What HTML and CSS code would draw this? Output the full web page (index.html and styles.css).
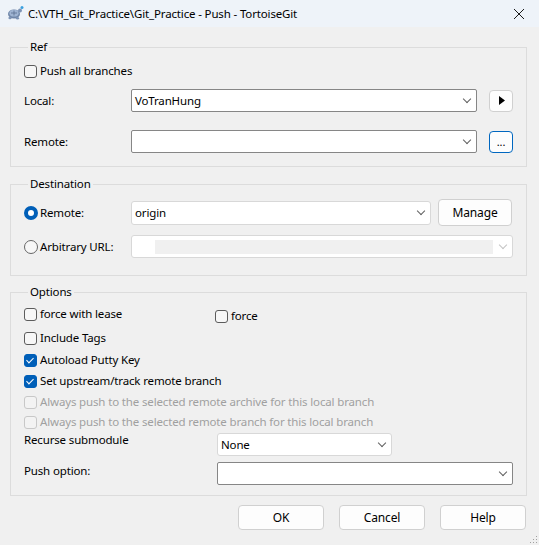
FILE: index.html
```html
<!DOCTYPE html>
<html>
<head>
<meta charset="utf-8">
<link rel="stylesheet" href="styles.css">
</head>
<body>
<div class="titlebar">
  <svg class="appicon" width="18" height="16" viewBox="0 0 18 16">
    <ellipse cx="8" cy="9" rx="6" ry="4.5" fill="#6f86a8"/>
    <ellipse cx="8" cy="8.2" rx="4.6" ry="3.4" fill="#9fb4d2"/>
    <path d="M5 8 h6 M8 5.5 v5" stroke="#5b6f90" stroke-width="0.8"/>
    <circle cx="14" cy="5.5" r="2" fill="#7d93b5"/>
    <circle cx="16" cy="2.5" r="1.5" fill="#3aa0e0"/>
    <ellipse cx="4" cy="13" rx="1.6" ry="1.2" fill="#7d93b5"/>
    <ellipse cx="11.5" cy="13.3" rx="1.6" ry="1.2" fill="#7d93b5"/>
  </svg>
  <span class="title">C:\VTH_Git_Practice\Git_Practice - Push - TortoiseGit</span>
  <svg class="close" width="12" height="12" viewBox="0 0 12 12">
    <path d="M1 1 L11 11 M11 1 L1 11" stroke="#1a1a1a" stroke-width="1"/>
  </svg>
</div>

<div class="content">
  <fieldset class="group group-ref">
    <legend>Ref</legend>
    <div class="check-row ref-check">
      <span class="cb"></span><span>Push all branches</span>
    </div>
    <div class="ref-grid ref-local">
      <span class="label">Local:</span>
      <div class="combo combo-dark"><span class="combo-text">VoTranHung</span><span class="chev"></span></div>
      <button class="btn btn-small"><svg width="6" height="9" viewBox="0 0 6 9"><path d="M0 0 L6 4.5 L0 9 Z" fill="#000"/></svg></button>
    </div>
    <div class="ref-grid ref-remote">
      <span class="label">Remote:</span>
      <div class="combo combo-dark"><span class="combo-text"></span><span class="chev"></span></div>
      <button class="btn btn-small btn-focus">...</button>
    </div>
  </fieldset>

  <fieldset class="group group-dest">
    <legend>Destination</legend>
    <div class="dest-row dest-remote">
      <div class="radio-label"><span class="radio radio-on"></span><span>Remote:</span></div>
      <div class="combo combo-light combo-origin"><span class="combo-text">origin</span><span class="chev"></span></div>
      <button class="btn btn-manage">Manage</button>
    </div>
    <div class="dest-row dest-url">
      <div class="radio-label"><span class="radio"></span><span>Arbitrary URL:</span></div>
      <div class="combo combo-light combo-disabled combo-url"><span class="url-bar"></span><span class="chev chev-dis"></span></div>
    </div>
  </fieldset>

  <fieldset class="group group-opt">
    <legend>Options</legend>
    <div class="opt-first">
      <div class="check-row"><span class="cb"></span><span>force with lease</span></div>
      <div class="check-row force"><span class="cb"></span><span>force</span></div>
    </div>
    <div class="check-row opt-tags"><span class="cb"></span><span>Include Tags</span></div>
    <div class="check-row opt-putty"><span class="cb cb-on"></span><span>Autoload Putty Key</span></div>
    <div class="check-row opt-up"><span class="cb cb-on"></span><span>Set upstream/track remote branch</span></div>
    <div class="check-row opt-dis1 disabled"><span class="cb cb-dis"></span><span>Always push to the selected remote archive for this local branch</span></div>
    <div class="check-row opt-dis2 disabled"><span class="cb cb-dis"></span><span>Always push to the selected remote branch for this local branch</span></div>
    <div class="opt-grid opt-recurse">
      <span class="label">Recurse submodule</span>
      <div class="combo combo-light combo-none"><span class="combo-text">None</span><span class="chev"></span></div>
    </div>
    <div class="opt-grid opt-push">
      <span class="label">Push option:</span>
      <div class="combo combo-dark combo-push"><span class="combo-text"></span><span class="chev"></span></div>
    </div>
  </fieldset>

  <div class="buttons">
    <button class="btn btn-dlg">OK</button>
    <button class="btn btn-dlg">Cancel</button>
    <button class="btn btn-dlg">Help</button>
  </div>
</div>
<svg class="grip" width="8" height="8" viewBox="0 0 8 8">
  <rect x="6" y="0" width="1" height="1" fill="#a0a0a0"/>
  <rect x="3" y="3" width="1" height="1" fill="#a0a0a0"/>
  <rect x="6" y="3" width="1" height="1" fill="#a0a0a0"/>
  <rect x="0" y="6" width="1" height="1" fill="#a0a0a0"/>
  <rect x="3" y="6" width="1" height="1" fill="#a0a0a0"/>
  <rect x="6" y="6" width="1" height="1" fill="#a0a0a0"/>
</svg>
</body>
</html>
```

FILE: styles.css
```css
* { box-sizing: border-box; }
html, body {
  margin: 0;
  padding: 0;
  background: #f0f0f0;
  width: 539px;
  height: 545px;
  overflow: hidden;
  font-family: "Noto Sans", "Open Sans", sans-serif;
  font-size: 11.5px;
  letter-spacing: -0.15px;
  color: #000;
}
body { position: relative; }

.titlebar {
  height: 27px;
  background: #eef3f9;
  display: flex;
  align-items: center;
  padding-left: 6px;
}
.appicon { margin-right: 4px; margin-top: -1px; }
.title { flex: 1; line-height: 16px; }
.close { margin-right: 14px; }

.content {
  padding: 12px 12px 0 10px;
}

.group {
  margin: 0;
  border: 1px solid #dcdcdc;
  padding: 0 13px;
  min-width: 0;
}
.group legend {
  line-height: 16px;
  height: 16px;
  padding: 0 2px;
  margin-left: 4px;
}
.group-ref { padding-bottom: 13px; }
.group-dest { margin-top: 9px; padding-bottom: 17px; }
.group-opt { margin-top: 8px; padding-bottom: 10px; }

.check-row {
  display: flex;
  align-items: center;
  height: 16px;
  line-height: 16px;
  white-space: nowrap;
}
.disabled { color: #a0a0a0; }

.cb {
  width: 13px;
  height: 13px;
  border: 1px solid #5c5c5c;
  border-radius: 3px;
  background: #f7f7f7;
  margin-right: 3px;
  flex: none;
  position: relative;
}
.cb-on {
  background: #005fb8;
  border-color: #005fb8;
}
.cb-on::after {
  content: "";
  position: absolute;
  left: 3px;
  top: 1px;
  width: 3px;
  height: 6px;
  border-right: 1.2px solid #fff;
  border-bottom: 1.2px solid #fff;
  transform: rotate(45deg);
}
.cb-dis {
  border-color: #c8c8c8;
  background: #f3f3f3;
}

.ref-check { margin-top: 8px; }

.ref-grid {
  display: grid;
  grid-template-columns: 107px 346px 36px;
  align-items: center;
  height: 23px;
}
.ref-grid .btn { justify-self: end; }
.ref-local { margin-top: 10px; }
.ref-remote { margin-top: 18px; }
.label { line-height: 16px; white-space: nowrap; }

.combo {
  height: 23px;
  background: #fff;
  border: 1px solid #868686;
  border-radius: 2px;
  display: flex;
  align-items: center;
  padding-left: 3px;
  padding-right: 5px;
}
.combo-light { border-color: #d8d8d8; border-radius: 3px; }
.combo-text { flex: 1; line-height: 16px; }
.chev {
  width: 6px;
  height: 6px;
  border-right: 1px solid #606060;
  border-bottom: 1px solid #606060;
  transform: rotate(45deg);
  margin-top: -3px;
  margin-right: 1px;
}
.chev-dis { border-color: #c4c4c4; margin-left: auto; }

.btn {
  font-family: inherit;
  font-size: 12px;
  letter-spacing: -0.15px;
  color: #000;
  background: #fdfdfd;
  border: 1px solid #d0d0d0;
  border-radius: 4px;
  padding: 0;
  display: flex;
  align-items: center;
  justify-content: center;
}
.btn-small {
  width: 24px;
  height: 22px;
}
.btn-small svg { margin-left: 2px; }
.btn-focus {
  border: 1px solid #0067c0;
  line-height: 10px;
  font-size: 11px;
}

.dest-row {
  display: flex;
  align-items: center;
}
.radio-label {
  width: 107px;
  display: flex;
  align-items: center;
  line-height: 16px;
  white-space: nowrap;
}
.radio {
  width: 14px;
  height: 14px;
  border-radius: 50%;
  border: 1px solid #666;
  background: #f7f7f7;
  margin-right: 2px;
  flex: none;
}
.radio-on {
  border: 4px solid #005fb8;
  background: #fff;
}
.dest-remote { margin-top: 7px; height: 27px; }
.combo-origin { width: 300px; height: 24px; }
.btn-manage {
  width: 74px;
  height: 27px;
  margin-left: 7px;
}
.dest-url { margin-top: 9px; height: 23px; }
.combo-url { width: 382px; padding-left: 0; }
.url-bar {
  display: block;
  width: 338px;
  height: 14px;
  background: #f0f0f0;
  margin-left: 23px;
}

.opt-first {
  display: flex;
  margin-top: 6px;
  height: 16px;
}
.opt-first .check-row:first-child { width: 191px; }
.force { margin-top: 2px; }
.opt-tags { margin-top: 8px; }
.opt-putty { margin-top: 6px; }
.opt-up { margin-top: 5px; }
.opt-dis1 { margin-top: 5px; }
.opt-dis2 { margin-top: 4px; }

.opt-grid {
  display: grid;
  grid-template-columns: 193px 1fr;
  align-items: start;
}
.opt-recurse { margin-top: 2px; }
.opt-recurse .combo { margin-top: 1px; }
.combo-none { width: 175px; }
.opt-push { margin-top: 6px; }
.opt-push .label { margin-top: 1px; }
.combo-push { width: 296px; }

.buttons {
  display: flex;
  justify-content: flex-end;
  gap: 15px;
  margin-top: 9px;
  padding-right: 1px;
}
.btn-dlg {
  width: 86px;
  height: 25px;
}

.grip {
  position: absolute;
  right: 1px;
  bottom: 1px;
}
```
